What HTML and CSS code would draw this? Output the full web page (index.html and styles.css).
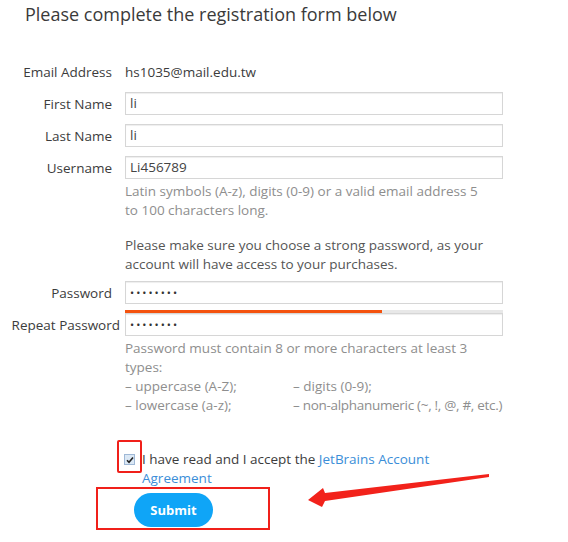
FILE: index.html
```html
<!DOCTYPE html>
<html>
<head>
<meta charset="utf-8">
<link rel="stylesheet" href="styles.css">
</head>
<body>
<div class="page">
  <h1 class="title">Please complete the registration form below</h1>
  <form class="form">
    <div class="row">
      <label class="label">Email Address</label>
      <div class="value">hs1035@mail.edu.tw</div>
    </div>
    <div class="row">
      <label class="label">First Name</label>
      <div class="input">li</div>
    </div>
    <div class="row">
      <label class="label">Last Name</label>
      <div class="input">li</div>
    </div>
    <div class="row">
      <label class="label">Username</label>
      <div class="input">Li456789</div>
    </div>
    <div class="row row-text">
      <div></div>
      <div class="field-text">
        <p class="hint">Latin symbols (A-z), digits (0-9) or a valid email address 5 to 100 characters long.</p>
        <p class="note">Please make sure you choose a strong password, as your account will have access to your purchases.</p>
      </div>
    </div>
    <div class="row row-pw">
      <label class="label">Password</label>
      <div class="input dots">••••••••</div>
    </div>
    <div class="row row-bar">
      <div></div>
      <div class="strength"><div class="strength-fill" style="width: 68%"></div></div>
    </div>
    <div class="row">
      <label class="label label-long">Repeat Password</label>
      <div class="input dots">••••••••</div>
    </div>
    <div class="row row-text">
      <div></div>
      <div class="rules">
        <p>Password must contain 8 or more characters at least 3 types:</p>
        <div class="rules-grid">
          <span>– uppercase (A-Z);</span><span>– digits (0-9);</span>
          <span>– lowercase (a-z);</span><span class="tight">– non-alphanumeric (~, !, @, #, etc.)</span>
        </div>
      </div>
    </div>
    <div class="row row-agree">
      <div></div>
      <div class="agree">
        <span class="checkbox"><svg width="8" height="8" viewBox="0 0 8 8"><path d="M1 4.2 L3 6.2 L7 1.5" fill="none" stroke="#222" stroke-width="1.6"/></svg></span>
        <p class="agree-text">I have read and I accept the <a class="link">JetBrains Account</a></p>
        <p class="agree-text"><a class="link">Agreement</a></p>
      </div>
    </div>
    <div class="submit-row">
      <button type="button" class="submit">Submit</button>
    </div>
  </form>
  <div class="mark mark-check"></div>
  <div class="mark mark-submit"></div>
  <svg class="arrow" width="190" height="40" viewBox="0 0 190 40">
    <polygon points="181,0 17,19 15,14 0,26 14,33 17,27 181,3" fill="#f2221b"/>
  </svg>
</div>
</body>
</html>
```
FILE: styles.css
```css
html, body {
  margin: 0;
  padding: 0;
  background: #ffffff;
}
.page {
  position: relative;
  width: 568px;
  height: 542px;
  font-family: "Open Sans", "Lato", sans-serif;
  color: #333333;
  overflow: hidden;
}
.title {
  margin: 0;
  padding: 4px 0 0 25px;
  font-size: 18px;
  font-weight: normal;
  line-height: 20px;
  color: #3a3a3a;
}
.form {
  display: flex;
  flex-direction: column;
  margin-top: 36px;
}
.row {
  display: grid;
  grid-template-columns: 112px 378px;
  column-gap: 13px;
  align-items: center;
  height: 23px;
  margin-bottom: 9px;
  font-size: 13.5px;
}
.label {
  text-align: right;
  color: #3c3c3c;
  white-space: nowrap;
}
.label-long {
  margin-right: -8px;
}
.value {
  color: #3c3c3c;
}
.input {
  box-sizing: border-box;
  height: 23px;
  border: 1px solid #d6d6d6;
  box-shadow: inset 0 1px 1px #eeeeee;
  padding: 0 4px;
  line-height: 21px;
  color: #444444;
  background: #fff;
}
.dots {
  font-size: 11px;
  letter-spacing: 2px;
  color: #333;
}
.row-text {
  height: auto;
  align-items: start;
  margin-bottom: 0;
  margin-top: -6px;
}
.field-text p {
  margin: 0;
  line-height: 19px;
}
.hint {
  color: #8e8e8e;
  max-width: 362px;
}
.note {
  margin-top: 16px !important;
  color: #555555;
  padding-bottom: 7px;
}
.row-pw {
  margin-bottom: 6px;
}
.row-bar {
  height: 3px;
  margin-bottom: 0;
}
.strength {
  height: 3px;
  background: #e8e8e8;
}
.strength-fill {
  height: 3px;
  background: #f4520e;
}
.rules {
  color: #8e8e8e;
  line-height: 19px;
}
.rules p {
  margin: 0;
}
.rules-grid {
  display: grid;
  grid-template-columns: 168px auto;
  white-space: nowrap;
}
.tight {
  letter-spacing: -0.3px;
}
.row-agree {
  height: auto;
  align-items: start;
  margin-top: 35px;
  margin-bottom: 0;
}
.agree {
  position: relative;
  margin-left: -1px;
  padding-left: 18px;
  width: 300px;
  line-height: 19px;
  color: #3c3c3c;
}
.agree-text {
  margin: 0;
  white-space: nowrap;
}
.checkbox {
  position: absolute;
  left: 0;
  top: 4px;
  width: 9px;
  height: 9px;
  border: 1px solid #9fb8d6;
  background: #dbe8f5;
  display: flex;
  align-items: center;
  justify-content: center;
}
.link {
  color: #3b8ed8;
  text-decoration: none;
}
.submit-row {
  padding-left: 134px;
  padding-top: 5px;
}
.submit {
  width: 79px;
  height: 34px;
  border: none;
  border-radius: 17px;
  background: #0fa5f7;
  color: #ffffff;
  font-family: "Open Sans", "Lato", sans-serif;
  font-weight: bold;
  font-size: 13px;
  padding: 0;
}
.mark {
  position: absolute;
  border: 2px solid #f0201a;
  box-sizing: border-box;
}
.mark-check {
  left: 117px;
  top: 440px;
  width: 25px;
  height: 33px;
  border-radius: 2px;
}
.mark-submit {
  left: 96px;
  top: 487px;
  width: 174px;
  height: 43px;
}
.arrow {
  position: absolute;
  left: 308px;
  top: 474px;
}
```
